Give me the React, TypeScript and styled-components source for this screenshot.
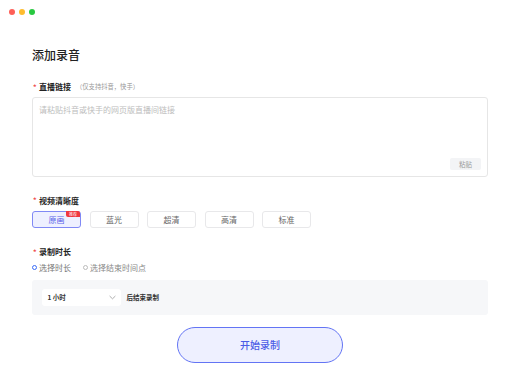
import React, { useState } from "react";
import styled, { createGlobalStyle } from "styled-components";

const Global = createGlobalStyle`
  html, body { margin: 0; padding: 0; background: #fff; }
  body { font-family: "Noto Sans CJK SC", "Noto Sans", sans-serif; color: #222; }
  * { box-sizing: border-box; }
`;

const Window = styled.div`
  width: 520px;
  height: 384px;
  background: #fff;
  overflow: hidden;
`;

const TitleBar = styled.div`
  display: flex;
  gap: 4px;
  padding: 9px 0 0 9px;
  height: 24px;
`;

const Dot = styled.span<{ $c: string }>`
  width: 6px;
  height: 6px;
  border-radius: 50%;
  background: ${(p) => p.$c};
`;

const Content = styled.div`
  padding: 0 32px;
  display: flex;
  flex-direction: column;
`;

const Title = styled.h1`
  margin: 23px 0 0;
  font-size: 12px;
  line-height: 16px;
  font-weight: 500;
  color: #222;
`;

const Label = styled.div<{ $mt: number }>`
  margin-top: ${(p) => p.$mt}px;
  display: flex;
  align-items: center;
  height: 12px;
  font-size: 8px;
  font-weight: 700;
  color: #222;
`;

const Star = styled.span`
  color: #f04a4a;
  font-size: 7px;
  width: 7px;
  padding-left: 1px;
`;

const Hint = styled.span`
  margin-left: 5px;
  font-size: 6.3px;
  font-weight: 400;
  color: #999;
`;

const TextBox = styled.div`
  margin-top: 4.5px;
  height: 80px;
  border: 1px solid #e6e6e6;
  border-radius: 3px;
  padding: 6px 6px 6px 6px;
  display: flex;
  flex-direction: column;
  justify-content: space-between;
`;

const Placeholder = styled.div`
  font-size: 8px;
  line-height: 12px;
  color: #bdbdbd;
`;

const PasteBtn = styled.div`
  align-self: flex-end;
  width: 31px;
  height: 12px;
  border-radius: 2px;
  background: #f3f4f6;
  color: #999;
  font-size: 6.5px;
  display: flex;
  align-items: center;
  justify-content: center;
`;

const Chips = styled.div`
  margin-top: 5px;
  display: flex;
  gap: 8.5px;
`;

const Chip = styled.div<{ $active?: boolean }>`
  position: relative;
  width: 49px;
  height: 17px;
  border-radius: 3px;
  border: 1px solid ${(p) => (p.$active ? "#8089f5" : "#e8e8ea")};
  background: ${(p) => (p.$active ? "#eef0ff" : "#fff")};
  color: ${(p) => (p.$active ? "#5a62e8" : "#666")};
  font-size: 8px;
  display: flex;
  align-items: center;
  justify-content: center;
`;

const Badge = styled.span`
  position: absolute;
  top: -1px;
  right: 0px;
  width: 14px;
  height: 6px;
  background: #f0373f;
  border-radius: 0 2px 0 2px;
  color: #fff;
  font-size: 4px;
  line-height: 6px;
  text-align: center;
`;

const RadioRow = styled.div`
  margin-top: 5px;
  display: flex;
  align-items: center;
  gap: 12px;
  height: 10px;
`;

const RadioItem = styled.div<{ $on?: boolean }>`
  display: flex;
  align-items: center;
  gap: 2px;
  font-size: 8px;
  color: ${(p) => (p.$on ? "#777" : "#888")};
`;

const RadioCircle = styled.span<{ $on?: boolean }>`
  width: 5px;
  height: 5px;
  border-radius: 50%;
  border: ${(p) => (p.$on ? "1.4px solid #3b6cf6" : "0.8px solid #bbb")};
  background: #fff;
`;

const Panel = styled.div`
  margin-top: 7px;
  height: 35px;
  border-radius: 3px;
  background: #f6f7f9;
  display: flex;
  align-items: center;
  padding-left: 9.5px;
  gap: 6px;
`;

const Select = styled.div`
  width: 79px;
  height: 17px;
  background: #fff;
  border-radius: 3px;
  display: flex;
  align-items: center;
  justify-content: space-between;
  padding: 0 5px 0 6px;
  font-size: 6.5px;
  font-weight: 700;
  color: #333;
`;

const After = styled.span`
  font-size: 6.5px;
  font-weight: 700;
  color: #333;
`;

const Footer = styled.div`
  margin-top: 12px;
  display: flex;
  justify-content: center;
`;

const StartBtn = styled.button`
  width: 166px;
  height: 36px;
  border-radius: 18px;
  border: 1.3px solid #6374f4;
  background: #eef0ff;
  color: #4b5be6;
  font-family: "Noto Sans CJK SC", sans-serif;
  font-size: 10px;
  font-weight: 500;
  cursor: pointer;
`;

const qualities = ["原画", "蓝光", "超清", "高清", "标准"];

export default function App() {
  const [q] = useState(0);
  return (
    <Window>
      <Global />
      <TitleBar>
        <Dot $c="#fe5f57" />
        <Dot $c="#febc2e" />
        <Dot $c="#28c840" />
      </TitleBar>
      <Content>
        <Title>添加录音</Title>
        <Label $mt={17.5}>
          <Star>*</Star>直播链接<Hint>（仅支持抖音，快手）</Hint>
        </Label>
        <TextBox>
          <Placeholder>请粘贴抖音或快手的网页版直播间链接</Placeholder>
          <PasteBtn>粘贴</PasteBtn>
        </TextBox>
        <Label $mt={17}>
          <Star>*</Star>视频清晰度
        </Label>
        <Chips>
          {qualities.map((name, i) => (
            <Chip key={name} $active={i === q}>
              {name}
              {i === 0 && <Badge>推荐</Badge>}
            </Chip>
          ))}
        </Chips>
        <Label $mt={17.5}>
          <Star>*</Star>录制时长
        </Label>
        <RadioRow>
          <RadioItem $on>
            <RadioCircle $on />
            选择时长
          </RadioItem>
          <RadioItem>
            <RadioCircle />
            选择结束时间点
          </RadioItem>
        </RadioRow>
        <Panel>
          <Select>
            <span>1 小时</span>
            <svg width="7" height="5" viewBox="0 0 7 5">
              <path d="M0.6 1 L3.5 3.8 L6.4 1" fill="none" stroke="#999" strokeWidth="0.8" />
            </svg>
          </Select>
          <After>后结束录制</After>
        </Panel>
        <Footer>
          <StartBtn>开始录制</StartBtn>
        </Footer>
      </Content>
    </Window>
  );
}
